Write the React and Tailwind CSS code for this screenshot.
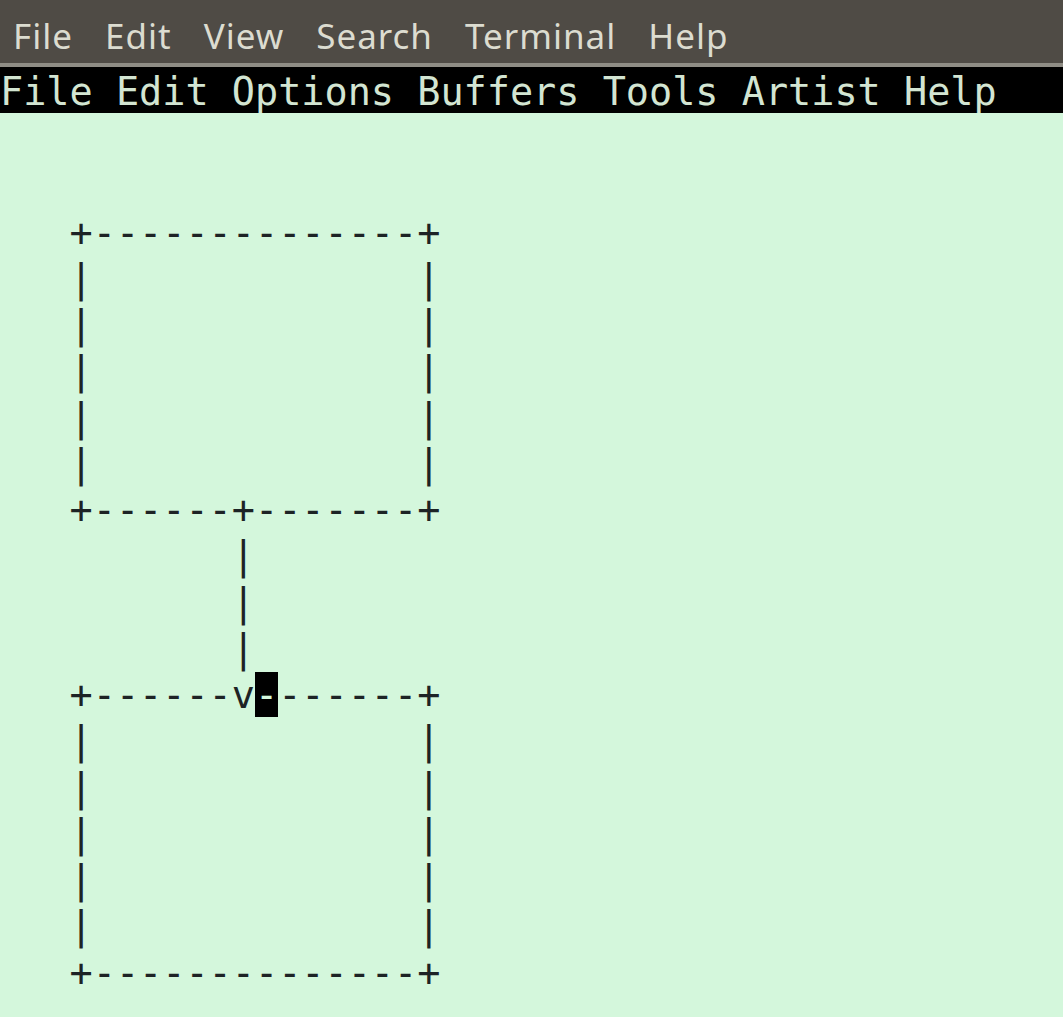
import React from 'react'

const termMenu = ['File', 'Edit', 'View', 'Search', 'Terminal', 'Help']

// rows after the emacs menu bar, one string per text row
const rows = [
  '',
  '',
  '   +--------------+',
  '   |              |',
  '   |              |',
  '   |              |',
  '   |              |',
  '   |              |',
  '   +------+-------+',
  '          |',
  '          |',
  '          |',
  null, // row with the cursor
  '   |              |',
  '   |              |',
  '   |              |',
  '   |              |',
  '   |              |',
  '   +--------------+',
]

const mono = { fontFamily: '"DejaVu Sans Mono", monospace' }

export default function App() {
  return (
    <div className="w-[1063px] h-[1017px] flex flex-col bg-[#d4f7dc] overflow-hidden">
      {/* terminal window menu */}
      <div className="h-[63px] flex items-center gap-[32px] pl-[13px] pt-[9px] bg-[#4f4b45] text-[#dcdcd0] text-[35px] tracking-[1px] font-['Noto_Sans',sans-serif]">
        {termMenu.map((m) => (
          <span key={m}>{m}</span>
        ))}
      </div>
      <div className="h-[4px] bg-[#8f8d85]" />

      {/* emacs menu bar */}
      <pre
        style={mono}
        className="bg-black text-[#d3e5d2] text-[38.5px] leading-[43px] m-0 pt-[3px]"
      >
        File Edit Options Buffers Tools Artist Help
      </pre>

      {/* buffer */}
      <pre
        style={mono}
        className="text-[#1d2325] text-[38.5px] leading-[46.25px] m-0 pt-[4px]"
      >
        {rows.map((r, i) =>
          r === null ? (
            <div key={i}>
              {'   +------v'}
              <span className="bg-black text-[#d4f7dc]">-</span>
              {'------+'}
            </div>
          ) : (
            <div key={i}>{r || ' '}</div>
          )
        )}
      </pre>
    </div>
  )
}
